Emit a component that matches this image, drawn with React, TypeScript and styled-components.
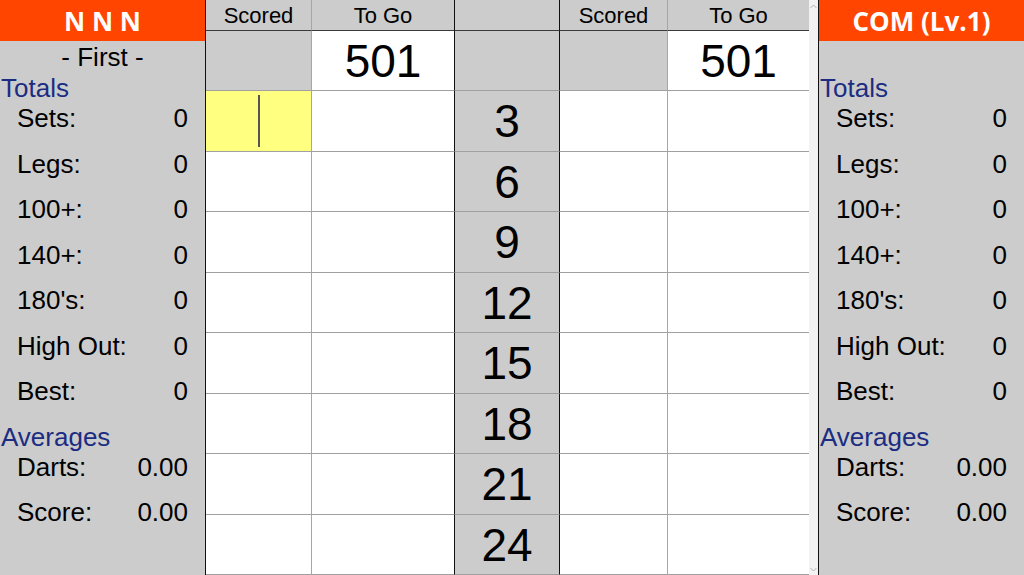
import React from "react";
import styled, { createGlobalStyle } from "styled-components";

const Global = createGlobalStyle`
  html, body { margin: 0; padding: 0; background: #fff; }
  body { font-family: "Liberation Sans", Arial, sans-serif; }
  * { box-sizing: border-box; }
`;

const Screen = styled.div`
  display: flex;
  width: 1024px;
  height: 575px;
  overflow: hidden;
  background: #fff;
`;

const Panel = styled.div<{ $side: "left" | "right" }>`
  width: 206px;
  flex: none;
  background: #cccccc;
  display: flex;
  flex-direction: column;
  ${(p) => (p.$side === "left" ? "border-right: 1px solid #111;" : "border-left: 1px solid #111;")}
`;

const PanelHeader = styled.div`
  height: 41px;
  background: #ff4500;
  color: #fff;
  font-family: "Open Sans", "Noto Sans", sans-serif;
  font-weight: 700;
  font-size: 26px;
  display: flex;
  align-items: center;
  justify-content: center;
  padding-top: 1px;
`;

const TurnLine = styled.div`
  height: 32px;
  font-size: 26px;
  line-height: 32px;
  text-align: center;
  color: #000;
`;

const SectionTitle = styled.div<{ $h: number }>`
  height: ${(p) => p.$h}px;
  line-height: 30px;
  font-size: 26px;
  color: #1b2c82;
  padding-left: 1px;
  display: flex;
  align-items: flex-end;
`;

const StatRow = styled.div`
  height: 45.5px;
  display: flex;
  justify-content: space-between;
  font-size: 26px;
  line-height: 30px;
  color: #000;
  padding: 0 17px 0 17px;
`;

const Board = styled.div`
  display: grid;
  grid-template-columns: 106px 143px 105px 108px 141px;
  grid-template-rows: 31px 60px repeat(8, 60.5px);
  width: 603px;
  flex: none;
`;

const Cell = styled.div<{ $bg?: string; $rightDark?: boolean; $bottomDark?: boolean; $noRight?: boolean }>`
  background: ${(p) => p.$bg || "#fff"};
  border-right: ${(p) => (p.$noRight ? "none" : p.$rightDark ? "1px solid #111" : "1px solid #a6a6a6")};
  border-bottom: ${(p) => (p.$bottomDark ? "1px solid #3a3a3a" : "1px solid #a0a0a0")};
  display: flex;
  align-items: center;
  justify-content: center;
  position: relative;
  color: #000;
`;

const HeadText = styled.span`
  font-size: 22px;
  line-height: 1;
  margin-top: 2px;
`;

const BigText = styled.span`
  font-size: 46px;
  line-height: 1;
  margin-top: 1px;
`;

const Caret = styled.span`
  position: absolute;
  left: 52px;
  top: 4px;
  width: 2px;
  height: 52px;
  background: #555;
`;

const Scrollbar = styled.div`
  width: 9px;
  flex: none;
  background: #f2f2f2;
  display: flex;
  flex-direction: column;
  justify-content: space-between;
  align-items: center;
  padding: 4px 0 3px;
`;

const Arrow = ({ down }: { down?: boolean }) => (
  <svg width="7" height="5" viewBox="0 0 7 5">
    <path
      d={down ? "M0.5 1 L3.5 4 L6.5 1" : "M0.5 4 L3.5 1 L6.5 4"}
      fill="none"
      stroke="#b0b0b0"
      strokeWidth="1"
    />
  </svg>
);

const stats: [string, string][] = [
  ["Sets:", "0"],
  ["Legs:", "0"],
  ["100+:", "0"],
  ["140+:", "0"],
  ["180's:", "0"],
  ["High Out:", "0"],
  ["Best:", "0"],
];

const avgs: [string, string][] = [
  ["Darts:", "0.00"],
  ["Score:", "0.00"],
];

const SidePanel = ({ side, name, turn }: { side: "left" | "right"; name: string; turn?: string }) => (
  <Panel $side={side}>
    <PanelHeader>{name}</PanelHeader>
    <TurnLine>{turn || ""}</TurnLine>
    <SectionTitle $h={30}>Totals</SectionTitle>
    {stats.map(([l, v]) => (
      <StatRow key={l}>
        <span>{l}</span>
        <span>{v}</span>
      </StatRow>
    ))}
    <SectionTitle $h={30}>Averages</SectionTitle>
    {avgs.map(([l, v]) => (
      <StatRow key={l}>
        <span>{l}</span>
        <span>{v}</span>
      </StatRow>
    ))}
  </Panel>
);

const GREY = "#cccccc";
const darts = [3, 6, 9, 12, 15, 18, 21, 24];

export default function App() {
  return (
    <>
      <Global />
      <Screen>
        <SidePanel side="left" name="N N N" turn="- First -" />
        <Board>
          <Cell $bg={GREY} $bottomDark><HeadText>Scored</HeadText></Cell>
          <Cell $bg={GREY} $bottomDark $rightDark><HeadText>To Go</HeadText></Cell>
          <Cell $bg={GREY} $bottomDark $rightDark />
          <Cell $bg={GREY} $bottomDark><HeadText>Scored</HeadText></Cell>
          <Cell $bg={GREY} $bottomDark $noRight><HeadText>To Go</HeadText></Cell>

          <Cell $bg={GREY} />
          <Cell $rightDark><BigText>501</BigText></Cell>
          <Cell $bg={GREY} $rightDark />
          <Cell $bg={GREY} />
          <Cell $noRight><BigText>501</BigText></Cell>

          {darts.map((d, i) => (
            <React.Fragment key={d}>
              <Cell $bg={i === 0 ? "#ffff80" : undefined}>{i === 0 && <Caret />}</Cell>
              <Cell $rightDark />
              <Cell $bg={GREY} $rightDark><BigText>{d}</BigText></Cell>
              <Cell />
              <Cell $noRight />
            </React.Fragment>
          ))}
        </Board>
        <Scrollbar>
          <Arrow />
          <Arrow down />
        </Scrollbar>
        <SidePanel side="right" name="COM (Lv.1)" />
      </Screen>
    </>
  );
}
